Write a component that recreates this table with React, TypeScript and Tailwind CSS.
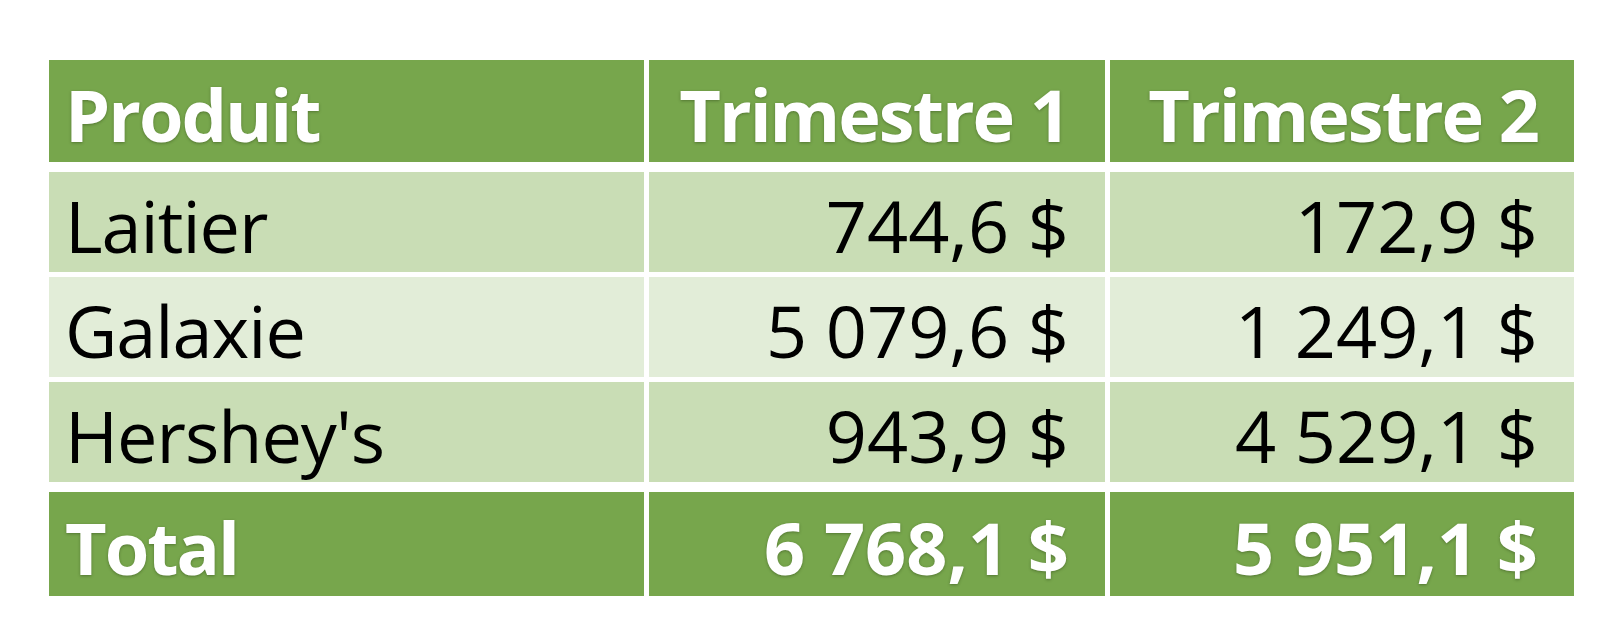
const rows = [
  { name: 'Laitier', q1: '744,6 $', q2: '172,9 $', bg: 'bg-[#c9ddb5]' },
  { name: 'Galaxie', q1: '5 079,6 $', q2: '1 249,1 $', bg: 'bg-[#e2edd8]' },
  { name: "Hershey's", q1: '943,9 $', q2: '4 529,1 $', bg: 'bg-[#c9ddb5]' },
]

// Same column template for every row so the cells line up.
const grid = 'grid grid-cols-[595px_456px_464px] gap-x-[5px]'
const cell = 'flex items-center pt-[6px]'
const head = 'bg-[#77a64c] font-bold text-white [text-shadow:0_1px_3px_rgba(40,60,20,0.45)]'

export default function App() {
  return (
    <div className="min-h-screen w-full bg-white pl-[49px] pt-[60px] text-[72px] leading-none text-black [font-family:'Open_Sans',sans-serif]">
      <div className={`${grid} h-[102px]`}>
        <div className={`${cell} ${head} pl-[16px] tracking-[-2px]`}>Produit</div>
        <div className={`${cell} ${head} justify-end pr-[36px] tracking-[-2px]`}>Trimestre 1</div>
        <div className={`${cell} ${head} justify-end pr-[36px] tracking-[-2px]`}>Trimestre 2</div>
      </div>
      <div className="mt-[10px] flex flex-col gap-[5px]">
        {rows.map((r) => (
          <div key={r.name} className={`${grid} h-[100px]`}>
            <div className={`${cell} ${r.bg} pl-[16px] tracking-[-1px]`}>{r.name}</div>
            <div className={`${cell} ${r.bg} justify-end pr-[36px]`}>{r.q1}</div>
            <div className={`${cell} ${r.bg} justify-end pr-[36px]`}>{r.q2}</div>
          </div>
        ))}
      </div>
      <div className={`${grid} mt-[10px] h-[104px]`}>
        <div className={`${cell} ${head} pl-[16px] tracking-[-2px]`}>Total</div>
        <div className={`${cell} ${head} justify-end pr-[36px]`}>6 768,1 $</div>
        <div className={`${cell} ${head} justify-end pr-[36px]`}>5 951,1 $</div>
      </div>
    </div>
  )
}
